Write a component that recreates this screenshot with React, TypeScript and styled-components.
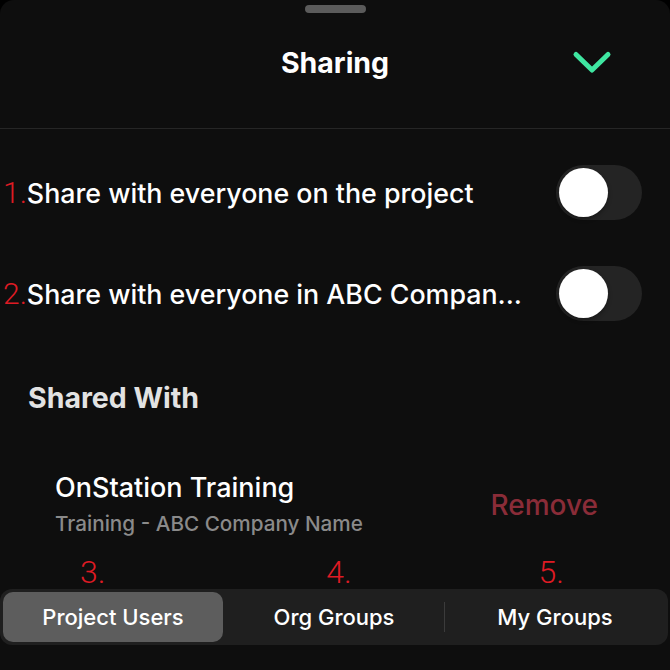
import React, { useState } from 'react';
import styled, { createGlobalStyle } from 'styled-components';

const GlobalStyle = createGlobalStyle`
  html, body {
    margin: 0;
    padding: 0;
    background: #000;
  }
  body {
    font-family: Inter, Roboto, "Noto Sans", "Liberation Sans", sans-serif;
    -webkit-font-smoothing: antialiased;
  }
`;

type Tab = 'project' | 'org' | 'mine';

const tabs: { id: Tab; label: string; marker: string; shift: number }[] = [
  { id: 'project', label: 'Project Users', marker: '3.', shift: -38 },
  { id: 'org', label: 'Org Groups', marker: '4.', shift: 8 },
  { id: 'mine', label: 'My Groups', marker: '5.', shift: -14 },
];

const App: React.FC = () => {
  const [shareProject, setShareProject] = useState(false);
  const [shareCompany, setShareCompany] = useState(false);
  const [activeTab, setActiveTab] = useState<Tab>('project');

  return (
    <>
      <GlobalStyle />
      <Sheet>
        <Handle />
        <Header>
          <span />
          <Title>Sharing</Title>
          <DoneButton aria-label="Close">
            <svg width="40" height="26" viewBox="0 0 40 26" fill="none">
              <path
                d="M4 5.5 L20 21 L36 5.5"
                stroke="#3fe6a1"
                strokeWidth="5"
                strokeLinecap="round"
                strokeLinejoin="round"
              />
            </svg>
          </DoneButton>
        </Header>

        <OptionRow $first>
          <OptionLabel>
            <Marker>1.</Marker>Share with everyone on the project
          </OptionLabel>
          <Toggle $on={shareProject} onClick={() => setShareProject(!shareProject)}>
            <Knob $on={shareProject} />
          </Toggle>
        </OptionRow>
        <OptionRow>
          <OptionLabel>
            <Marker>2.</Marker>Share with everyone in ABC Compan...
          </OptionLabel>
          <Toggle $on={shareCompany} onClick={() => setShareCompany(!shareCompany)}>
            <Knob $on={shareCompany} />
          </Toggle>
        </OptionRow>

        <SectionTitle>Shared With</SectionTitle>

        <SharedItem>
          <ItemText>
            <ItemName>OnStation Training</ItemName>
            <ItemMeta>Training - ABC Company Name</ItemMeta>
          </ItemText>
          <RemoveButton>Remove</RemoveButton>
        </SharedItem>

        <MarkerRow>
          {tabs.map((t) => (
            <TabMarker key={t.id} $shift={t.shift}>
              {t.marker}
            </TabMarker>
          ))}
        </MarkerRow>

        <Segmented>
          {tabs.map((t, i) => (
            <React.Fragment key={t.id}>
              {i > 0 && <SegDivider $hidden={activeTab === t.id || activeTab === tabs[i - 1].id} />}
              <Segment $active={activeTab === t.id} onClick={() => setActiveTab(t.id)}>
                {t.label}
              </Segment>
            </React.Fragment>
          ))}
        </Segmented>
      </Sheet>
    </>
  );
};

const Sheet = styled.div`
  height: 670px;
  box-sizing: border-box;
  background: #0e0e0e;
  border-radius: 14px 14px 0 0;
  display: flex;
  flex-direction: column;
  overflow: hidden;
`;

const Handle = styled.div`
  width: 61px;
  height: 8px;
  margin: 5px auto 0;
  border-radius: 4px;
  background: #5b5b5b;
`;

const Header = styled.div`
  height: 116px;
  display: grid;
  grid-template-columns: 1fr auto 1fr;
  align-items: center;
  border-bottom: 1px solid #262626;
  padding-bottom: 16px;
  box-sizing: border-box;
`;

const Title = styled.h1`
  margin: 0;
  font-size: 28.5px;
  font-weight: 700;
  color: #fff;
`;

const DoneButton = styled.button`
  justify-self: end;
  margin-right: 58px;
  margin-top: -2px;
  padding: 0;
  border: none;
  background: none;
  display: flex;
`;

const OptionRow = styled.div<{ $first?: boolean }>`
  display: flex;
  align-items: center;
  justify-content: space-between;
  height: 55px;
  margin-top: ${({ $first }) => ($first ? '36px' : '46px')};
  padding: 0 28px 0 3px;
`;

const OptionLabel = styled.div`
  font-size: 26.8px;
  font-weight: 500;
  color: #fff;
  white-space: nowrap;
`;

const Marker = styled.span`
  font-family: Roboto, sans-serif;
  color: #de1b24;
  font-weight: 300;
  font-size: 30px;
`;

const Toggle = styled.button<{ $on: boolean }>`
  width: 86px;
  height: 55px;
  border: none;
  border-radius: 28px;
  padding: 3px;
  background: ${({ $on }) => ($on ? '#3fe6a1' : '#242424')};
  display: flex;
  justify-content: ${({ $on }) => ($on ? 'flex-end' : 'flex-start')};
  align-items: center;
  box-sizing: border-box;
  cursor: pointer;
`;

const Knob = styled.span<{ $on: boolean }>`
  width: 49px;
  height: 49px;
  border-radius: 50%;
  background: #fff;
  box-shadow: 0 2px 4px rgba(0, 0, 0, 0.35);
`;

const SectionTitle = styled.h2`
  margin: 62px 0 0 28px;
  font-size: 28.5px;
  line-height: 30px;
  font-weight: 700;
  color: #e2e2e2;
`;

const SharedItem = styled.div`
  display: flex;
  align-items: center;
  justify-content: space-between;
  margin-top: 60px;
  padding: 0 72px 0 55px;
`;

const ItemText = styled.div`
  display: flex;
  flex-direction: column;
  gap: 9px;
`;

const ItemName = styled.div`
  font-size: 27px;
  line-height: 30px;
  font-weight: 500;
  color: #fff;
`;

const ItemMeta = styled.div`
  font-size: 20.7px;
  line-height: 24px;
  font-weight: 500;
  color: #8a8a8a;
`;

const RemoveButton = styled.button`
  border: none;
  background: none;
  padding: 0;
  font-family: inherit;
  font-size: 28px;
  font-weight: 500;
  color: #8a2c38;
  cursor: pointer;
`;

const MarkerRow = styled.div`
  display: grid;
  grid-template-columns: repeat(3, 1fr);
  margin-top: 20px;
  height: 32px;
  align-items: center;
`;

const TabMarker = styled.span<{ $shift: number }>`
  justify-self: center;
  font-family: Roboto, sans-serif;
  color: #de1b24;
  font-weight: 300;
  font-size: 32px;
  line-height: 32px;
  margin-left: ${({ $shift }) => $shift}px;
`;

const Segmented = styled.div`
  display: flex;
  align-items: center;
  height: 56px;
  margin: 1px 2px 0 0;
  padding: 3px;
  box-sizing: border-box;
  border-radius: 12px;
  background: #1f1f1f;
`;

const Segment = styled.button<{ $active: boolean }>`
  flex: 1;
  height: 100%;
  border: none;
  border-radius: 10px;
  font-family: inherit;
  font-size: 22px;
  font-weight: 500;
  color: #fff;
  background: ${({ $active }) => ($active ? '#5d5d5d' : 'transparent')};
  cursor: pointer;
`;

const SegDivider = styled.span<{ $hidden: boolean }>`
  width: 1px;
  height: 30px;
  background: ${({ $hidden }) => ($hidden ? 'transparent' : '#3b3b3b')};
`;

export default App;
